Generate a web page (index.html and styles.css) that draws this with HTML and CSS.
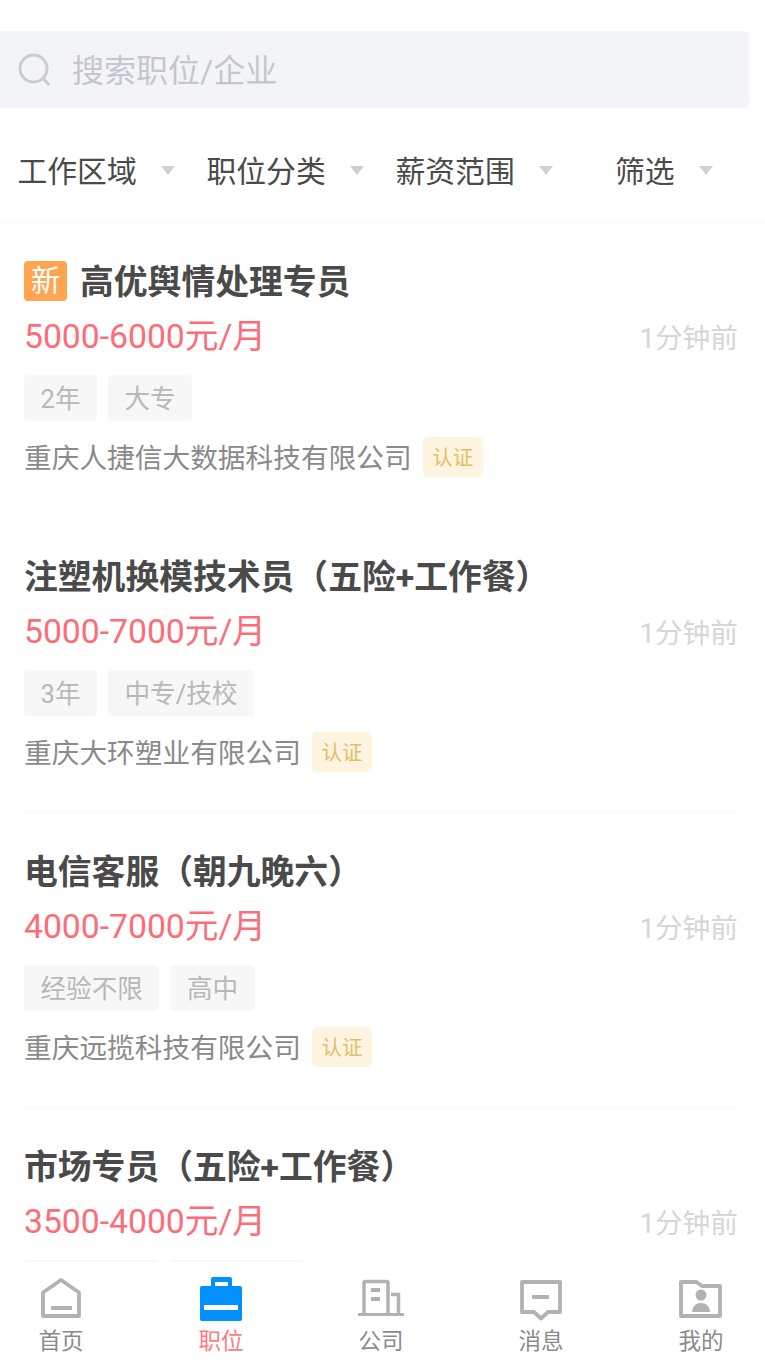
FILE: index.html
```html
<!DOCTYPE html>
<html lang="zh">
<head>
<meta charset="utf-8">
<title>职位</title>
<link rel="stylesheet" href="styles.css">
</head>
<body>
<div class="app">
  <div class="search">
    <svg class="search-icon" width="34" height="34" viewBox="0 0 34 34"><circle cx="15.500" cy="15.500" r="13.500" fill="none" stroke="#ccc" stroke-width="3"/><path d="M25 25l6 7" fill="none" stroke="#ccc" stroke-width="3"/></svg>
    <span class="search-text">搜索职位/企业</span>
  </div>
  <div class="filters">
    <div class="filter"><span>工作区域</span><i class="arrow"></i></div>
    <div class="filter"><span>职位分类</span><i class="arrow"></i></div>
    <div class="filter"><span>薪资范围</span><i class="arrow"></i></div>
    <div class="filter last"><span>筛选</span><i class="arrow"></i></div>
  </div>
  <div class="list">
    <div class="card">
      <div class="title"><span class="new">新</span>高优舆情处理专员</div>
      <div class="pay"><span class="salary">5000-6000元/月</span><span class="time">1分钟前</span></div>
      <div class="tags"><span class="tag">2年</span><span class="tag">大专</span></div>
      <div class="company"><span class="company-name">重庆人捷信大数据科技有限公司</span><span class="cert">认证</span></div>
    </div>
    <div class="card">
      <div class="title">注塑机换模技术员（五险+工作餐）</div>
      <div class="pay"><span class="salary">5000-7000元/月</span><span class="time">1分钟前</span></div>
      <div class="tags"><span class="tag">3年</span><span class="tag">中专/技校</span></div>
      <div class="company"><span class="company-name">重庆大环塑业有限公司</span><span class="cert">认证</span></div>
    </div>
    <div class="card">
      <div class="title">电信客服（朝九晚六）</div>
      <div class="pay"><span class="salary">4000-7000元/月</span><span class="time">1分钟前</span></div>
      <div class="tags"><span class="tag">经验不限</span><span class="tag">高中</span></div>
      <div class="company"><span class="company-name">重庆远揽科技有限公司</span><span class="cert">认证</span></div>
    </div>
    <div class="card">
      <div class="title">市场专员（五险+工作餐）</div>
      <div class="pay"><span class="salary">3500-4000元/月</span><span class="time">1分钟前</span></div>
      <div class="tags"><span class="tag tag-clipped"></span><span class="tag tag-clipped"></span></div>
    </div>
  </div>
  <nav class="nav">
    <div class="tab">
      <svg width="42" height="44" viewBox="0 0 42 44"><path d="M3 15.500L21 3l18 12.500V39H3z" fill="none" stroke="#b2b2b2" stroke-width="3.800" stroke-linejoin="round"/><rect x="11" y="29" width="21" height="4" fill="#b2b2b2"/></svg>
      <span>首页</span>
    </div>
    <div class="tab active">
      <svg width="44" height="44" viewBox="0 0 44 44"><path d="M12 10V2a2 2 0 0 1 2-2h17a2 2 0 0 1 2 2v8h-4V5H16v5z" fill="#0091ff"/><rect x="1" y="9" width="42" height="35" rx="2" fill="#0091ff"/><rect x="5" y="28" width="34" height="5" fill="#fff"/></svg>
      <span>职位</span>
    </div>
    <div class="tab">
      <svg width="47" height="44" viewBox="0 0 47 44"><path d="M6 37V6a1.500 1.500 0 0 1 1.500-1.500h21A1.500 1.500 0 0 1 30 6v31" fill="none" stroke="#b2b2b2" stroke-width="3.500"/><path d="M33 17.500h7.500V37" fill="none" stroke="#b2b2b2" stroke-width="3.500"/><rect x="0" y="36" width="46" height="3" fill="#b2b2b2"/><rect x="13" y="11" width="9" height="4" fill="#b2b2b2"/><rect x="13" y="20" width="9" height="4" fill="#b2b2b2"/></svg>
      <span>公司</span>
    </div>
    <div class="tab">
      <svg width="44" height="44" viewBox="0 0 44 44"><path d="M3 5h38v30H29l-7 6.500L15 35H3z" fill="none" stroke="#b2b2b2" stroke-width="3.800" stroke-linejoin="round"/><rect x="13" y="18" width="17" height="4" fill="#b2b2b2"/></svg>
      <span>消息</span>
    </div>
    <div class="tab">
      <svg width="44" height="44" viewBox="0 0 44 44"><path d="M2 5h15.500l5.500 4h18v30H2z" fill="none" stroke="#b2b2b2" stroke-width="3.800" stroke-linejoin="round"/><circle cx="22" cy="18" r="5.500" fill="#b2b2b2"/><path d="M13 35c.5-6 4-9 9-9s8.500 3 9 9z" fill="#b2b2b2"/></svg>
      <span>我的</span>
    </div>
  </nav>
</div>
</body>
</html>
```
FILE: styles.css
```css
* { box-sizing: border-box; }
html, body { margin: 0; padding: 0; background: #fff; }
body { width: 765px; height: 1368px; overflow: hidden; font-family: Roboto, "Noto Sans CJK SC", sans-serif; }
.app { display: flex; flex-direction: column; width: 765px; height: 1368px; padding-top: 31px; overflow: hidden; }
.search { display: flex; align-items: center; gap: 20px; width: 749px; height: 77px; padding-left: 18px; background: #f3f4f8; border-radius: 0 5px 5px 0; flex: none; }
.search-text { margin-bottom: 4px; font-size: 32px; color: #c4c7cc; }
.filters { display: flex; width: 765px; height: 115px; padding-top: 8px; border-bottom: 1px solid #f9f9f9; flex: none; }
.filter { display: flex; align-items: center; width: 189px; padding-left: 17.500px; font-size: 29.800px; color: #4a4a4a; }
.filter.last { width: 180px; padding-left: 48px; }
.arrow { width: 0; height: 0; margin-left: 24.500px; margin-top: 2px; border-left: 7.500px solid transparent; border-right: 7.500px solid transparent; border-top: 9px solid #d0d0d0; }
.list { flex: 1; min-height: 0; overflow: hidden; width: 713px; margin-left: 24px; }
.card { height: 295px; padding-top: 37px; border-bottom: 1px solid #fafafa; }
.card:last-child { border-bottom: 0; }
.title { display: flex; align-items: center; height: 46px; font-size: 33.800px; line-height: 46px; font-weight: 700; color: #4a4a4a; }
.new { display: flex; align-items: center; justify-content: center; width: 43px; height: 40px; margin-right: 13px; margin-bottom: 4px; border-radius: 4px; background: #ffa54f; color: #fff; font-size: 29.600px; font-weight: 400; }
.pay { display: flex; justify-content: space-between; align-items: center; height: 46px; margin-top: 4px; }
.salary { font-size: 33.700px; color: #ff6b77; }
.time { margin-top: 6px; margin-right: -1px; font-size: 27.700px; color: #d6d6d6; }
.tags { display: flex; gap: 11px; margin-top: 19px; }
.tag { display: flex; align-items: center; height: 46px; padding: 0 16.500px 4px; border-radius: 4px; background: #f7f7f7; color: #b8b8b8; font-size: 25.600px; }
.tag-clipped { width: 135px; }
.company { display: flex; align-items: center; gap: 11px; height: 40px; margin-top: 16px; font-size: 27.700px; color: #8a8a8a; }
.company-name { margin-bottom: 2px; }
.cert { display: flex; align-items: center; height: 40px; padding: 0 9.500px 2px; border-radius: 5px; background: #fff4df; color: #e6bd6c; font-size: 20.500px; }
.nav { display: flex; flex: none; width: 800px; height: 106px; margin-left: -19px; background: #fff; }
.tab { display: flex; flex-direction: column; align-items: center; width: 160px; height: 100%; padding-top: 15px; color: #8a8a8a; font-size: 22.500px; line-height: 30px; }
.tab svg { display: block; flex: none; margin-bottom: 5px; }
.tab.active { color: #ff7a80; }
```
